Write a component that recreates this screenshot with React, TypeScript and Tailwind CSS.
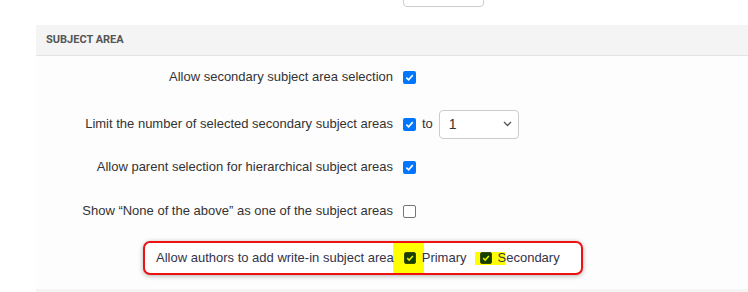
import React, {type ReactElement} from 'react';

const Check = ({checked = true}: {checked?: boolean}) => {
    if (!checked) {
        return (
            <span className="inline-block w-[13px] h-[13px] rounded-[2px] border border-[#767676] bg-white shrink-0" />
        );
    }
    return (
        <span className="inline-flex items-center justify-center w-[13px] h-[13px] rounded-[2px] bg-[#0075ff] shrink-0">
            <svg width="9" height="9" viewBox="0 0 10 10">
                <path d="M1.5 5.2 L4 7.6 L8.6 2.4" fill="none" stroke="#fff" strokeWidth="1.8" />
            </svg>
        </span>
    );
};

const MarkedCheck = () => (
    <span className="inline-flex items-center justify-center w-[12px] h-[12px] rounded-[2px] bg-[#143f00] border border-[#3a4a00] shrink-0">
        <svg width="8" height="8" viewBox="0 0 10 10">
            <path d="M1.5 5.2 L4 7.6 L8.6 2.4" fill="none" stroke="#e8f000" strokeWidth="1.9" />
        </svg>
    </span>
);

const Chevron = () => (
    <svg width="9" height="6" viewBox="0 0 9 6">
        <path d="M1 1 L4.5 4.5 L8 1" fill="none" stroke="#555" strokeWidth="1.3" />
    </svg>
);

const Row = ({label, children, className = ''}: {label: string; children: React.ReactNode; className?: string}) => (
    <div className={`flex items-center h-[30px] ${className}`}>
        <div className="w-[367px] text-right pr-[10px]">{label}</div>
        <div className="flex items-center">{children}</div>
    </div>
);

export default function App(): ReactElement {
    return (
        <div
            className="w-[748px] h-[292px] overflow-hidden bg-white text-[13px] text-[#333]"
            style={{fontFamily: '"Liberation Sans", Arial, sans-serif'}}>
            <div className="h-[25px] pl-[403px]">
                <div className="h-[7px] overflow-hidden flex items-end">
                    <div className="w-[81px] h-[29px] border border-[#ccc] rounded-[4px] bg-white" />
                </div>
            </div>

            <div className="ml-[36px] flex flex-col">
                <div
                    className="h-[31px] bg-[#f4f4f4] border-b border-[#e3e3e3] pl-[10px] flex items-center text-[11px] font-bold text-[#555]"
                    style={{fontFamily: 'Roboto, "Liberation Sans", sans-serif'}}>
                    SUBJECT AREA
                </div>

                <div className="bg-[#fdfdfd] flex flex-col h-[233px]">
                    <Row label="Allow secondary subject area selection" className="mt-[6px]">
                        <Check />
                    </Row>

                    <Row label="Limit the number of selected secondary subject areas" className="mt-[17px]">
                        <Check />
                        <span className="ml-[6px]">to</span>
                        <div className="ml-[6px] w-[80px] h-[29px] border border-[#ccc] rounded-[4px] bg-white flex items-center justify-between pl-[9px] pr-[6px] text-[14px]">
                            <span>1</span>
                            <Chevron />
                        </div>
                    </Row>

                    <Row label="Allow parent selection for hierarchical subject areas" className="mt-[13px]">
                        <Check />
                    </Row>

                    <Row label="Show “None of the above” as one of the subject areas" className="mt-[14px]">
                        <Check checked={false} />
                    </Row>

                    <div className="mt-[15px] ml-[107px] w-[440px] h-[34px] border-2 border-[#ee1111] rounded-[7px] shadow-[0_1px_5px_rgba(0,0,0,0.3)] bg-white relative flex items-center pl-[11px] text-[#33334a]">
                        <div className="absolute left-[248px] top-0 w-[31px] h-[30px] bg-[#ffff00]" />
                        <div className="absolute left-[330px] top-[9px] w-[30px] h-[13px] bg-[#ffff00]" />
                        <span className="relative">Allow authors to add write-in subject area</span>
                        <span className="relative ml-[10px] flex items-center">
                            <MarkedCheck />
                        </span>
                        <span className="relative ml-[6px]">Primary</span>
                        <span className="relative ml-[13px] flex items-center">
                            <MarkedCheck />
                        </span>
                        <span className="relative ml-[6px]">Secondary</span>
                    </div>
                </div>

                <div className="h-[4px] bg-[#f4f4f4]" />
            </div>
        </div>
    );
}
